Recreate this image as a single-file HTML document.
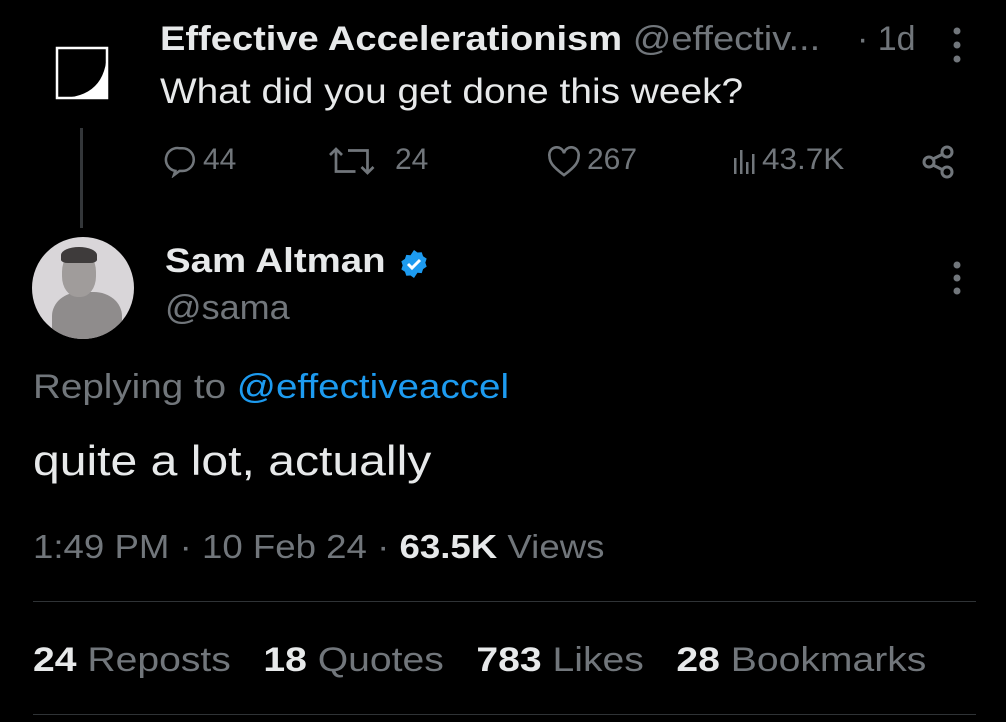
<!DOCTYPE html>
<html><head><meta charset="utf-8"><style>
body{margin:0;width:1006px;height:722px;background:#000;overflow:hidden;font-family:"Liberation Sans",sans-serif;position:relative;color:#e7e9ea}
.a{position:absolute;white-space:nowrap;transform-origin:0 0}
.g{color:#71767b}
b{font-weight:bold}
</style></head><body>
<svg class="a" style="left:55px;top:46px" width="54" height="54"><rect x="2" y="2" width="50" height="50" fill="#000" stroke="#fff" stroke-width="2.5"/><path d="M52 4 Q52 52 4 52 L52 52Z" fill="#fff"/></svg>
<div class="a" style="left:160px;top:20px;font-size:34px;transform:scaleX(1.12)"><b>Effective Accelerationism</b> <span class="g">@effectiv...</span></div>
<div class="a g" style="left:857px;top:20px;font-size:34px">· 1d</div>
<svg class="a" style="left:950px;top:26px" width="14" height="40"><circle cx="7" cy="5" r="3.5" fill="#71767b"/><circle cx="7" cy="19" r="3.5" fill="#71767b"/><circle cx="7" cy="33" r="3.5" fill="#71767b"/></svg>
<div class="a" style="left:160px;top:72px;font-size:35px;transform:scaleX(1.11)">What did you get done this week?</div>
<div class="a" style="left:80px;top:128px;width:3px;height:100px;background:#333639"></div>
<div class="a g" style="top:142px;left:0;font-size:30px;width:1006px;height:36px">
<svg class="a" style="left:163px;top:2px" width="36" height="34" viewBox="0 0 24 24" fill="none" stroke="#71767b" stroke-width="1.8"><path d="M8 19 L7 22 L11 19 H13 A8 8 0 0 0 13 3 H11 A8 8 0 0 0 8 19Z"/></svg>
<span class="a" style="left:203px;top:1px">44</span>
<svg class="a" style="left:325px;top:4px" width="64" height="30" viewBox="0 0 40 20" fill="none" stroke="#71767b" stroke-width="1.8"><path d="M2 6 L6 2 L10 6 M6 2 V17 H19"/><path d="M14 3 H27 V18 M23 14 L27 18 L31 14"/></svg>
<span class="a" style="left:395px;top:1px">24</span>
<svg class="a" style="left:546px;top:4px" width="36" height="32" viewBox="0 0 24 22" fill="none" stroke="#71767b" stroke-width="1.8"><path d="M12 20 C4 14 2 11 2 7 A5 5 0 0 1 12 5 A5 5 0 0 1 22 7 C22 11 20 14 12 20Z"/></svg>
<span class="a" style="left:587px;top:1px">267</span>
<svg class="a" style="left:733px;top:4px" width="24" height="30"><rect x="1" y="12" width="2.5" height="16" fill="#71767b"/><rect x="7" y="4" width="2.5" height="24" fill="#71767b"/><rect x="13" y="16" width="2.5" height="12" fill="#71767b"/><rect x="19" y="8" width="2.5" height="20" fill="#71767b"/></svg>
<span class="a" style="left:762px;top:1px;transform:scaleX(1.05)">43.7K</span>
<svg class="a" style="left:920px;top:2px" width="36" height="36" viewBox="0 0 36 36" fill="none" stroke="#71767b" stroke-width="3"><circle cx="9" cy="18" r="5"/><circle cx="27" cy="8" r="5"/><circle cx="27" cy="28" r="5"/><path d="M13 15 L23 10 M13 21 L23 26"/></svg>
</div>
<div class="a" style="left:32px;top:237px;width:102px;height:102px;border-radius:50%;overflow:hidden;background:#d9d6d9">
<div class="a" style="left:20px;top:55px;width:70px;height:60px;border-radius:40% 40% 0 0;background:#8f8c8c"></div>
<div class="a" style="left:30px;top:14px;width:34px;height:46px;border-radius:45%;background:#a09c9b"></div>
<div class="a" style="left:29px;top:10px;width:36px;height:16px;border-radius:50% 50% 20% 20%;background:#3e3b3b"></div>
</div>
<div class="a" style="left:165px;top:242px;font-size:34px;transform:scaleX(1.13)"><b>Sam Altman</b></div>
<svg class="a" style="left:398px;top:248px" width="32" height="32" viewBox="0 0 24 24"><path d="M12 1.5l2.6 1.9 3.2-.2 1 3 2.7 1.8-1 3 1 3-2.7 1.8-1 3-3.2-.2L12 22.5l-2.6-1.9-3.2.2-1-3-2.7-1.8 1-3-1-3 2.7-1.8 1-3 3.2.2z" fill="#1d9bf0"/><path d="M7.5 12l3 3 6-6" stroke="#fff" stroke-width="2.2" fill="none"/></svg>
<div class="a g" style="left:165px;top:289px;font-size:34px;transform:scaleX(1.06)">@sama</div>
<svg class="a" style="left:950px;top:260px" width="14" height="40"><circle cx="7" cy="5" r="3.5" fill="#71767b"/><circle cx="7" cy="18" r="3.5" fill="#71767b"/><circle cx="7" cy="31" r="3.5" fill="#71767b"/></svg>
<div class="a g" style="left:33px;top:368px;font-size:34px;transform:scaleX(1.135)">Replying to <span style="color:#1d9bf0">@effectiveaccel</span></div>
<div class="a" style="left:33px;top:437px;font-size:42px;transform:scaleX(1.145)">quite a lot, actually</div>
<div class="a g" style="left:33px;top:528px;font-size:33px;transform:scaleX(1.11)">1:49 PM · 10 Feb 24 · <b style="color:#e7e9ea">63.5K</b> Views</div>
<div class="a" style="left:33px;top:601px;width:943px;height:1px;background:#2f3336"></div>
<div class="a g" style="left:33px;top:641px;font-size:34px;transform:scaleX(1.15)"><b style="color:#e7e9ea">24</b> Reposts&nbsp;&nbsp; <b style="color:#e7e9ea">18</b> Quotes&nbsp;&nbsp; <b style="color:#e7e9ea">783</b> Likes&nbsp;&nbsp; <b style="color:#e7e9ea">28</b> Bookmarks</div>
<div class="a" style="left:33px;top:714px;width:943px;height:1px;background:#2f3336"></div>
</body></html>
